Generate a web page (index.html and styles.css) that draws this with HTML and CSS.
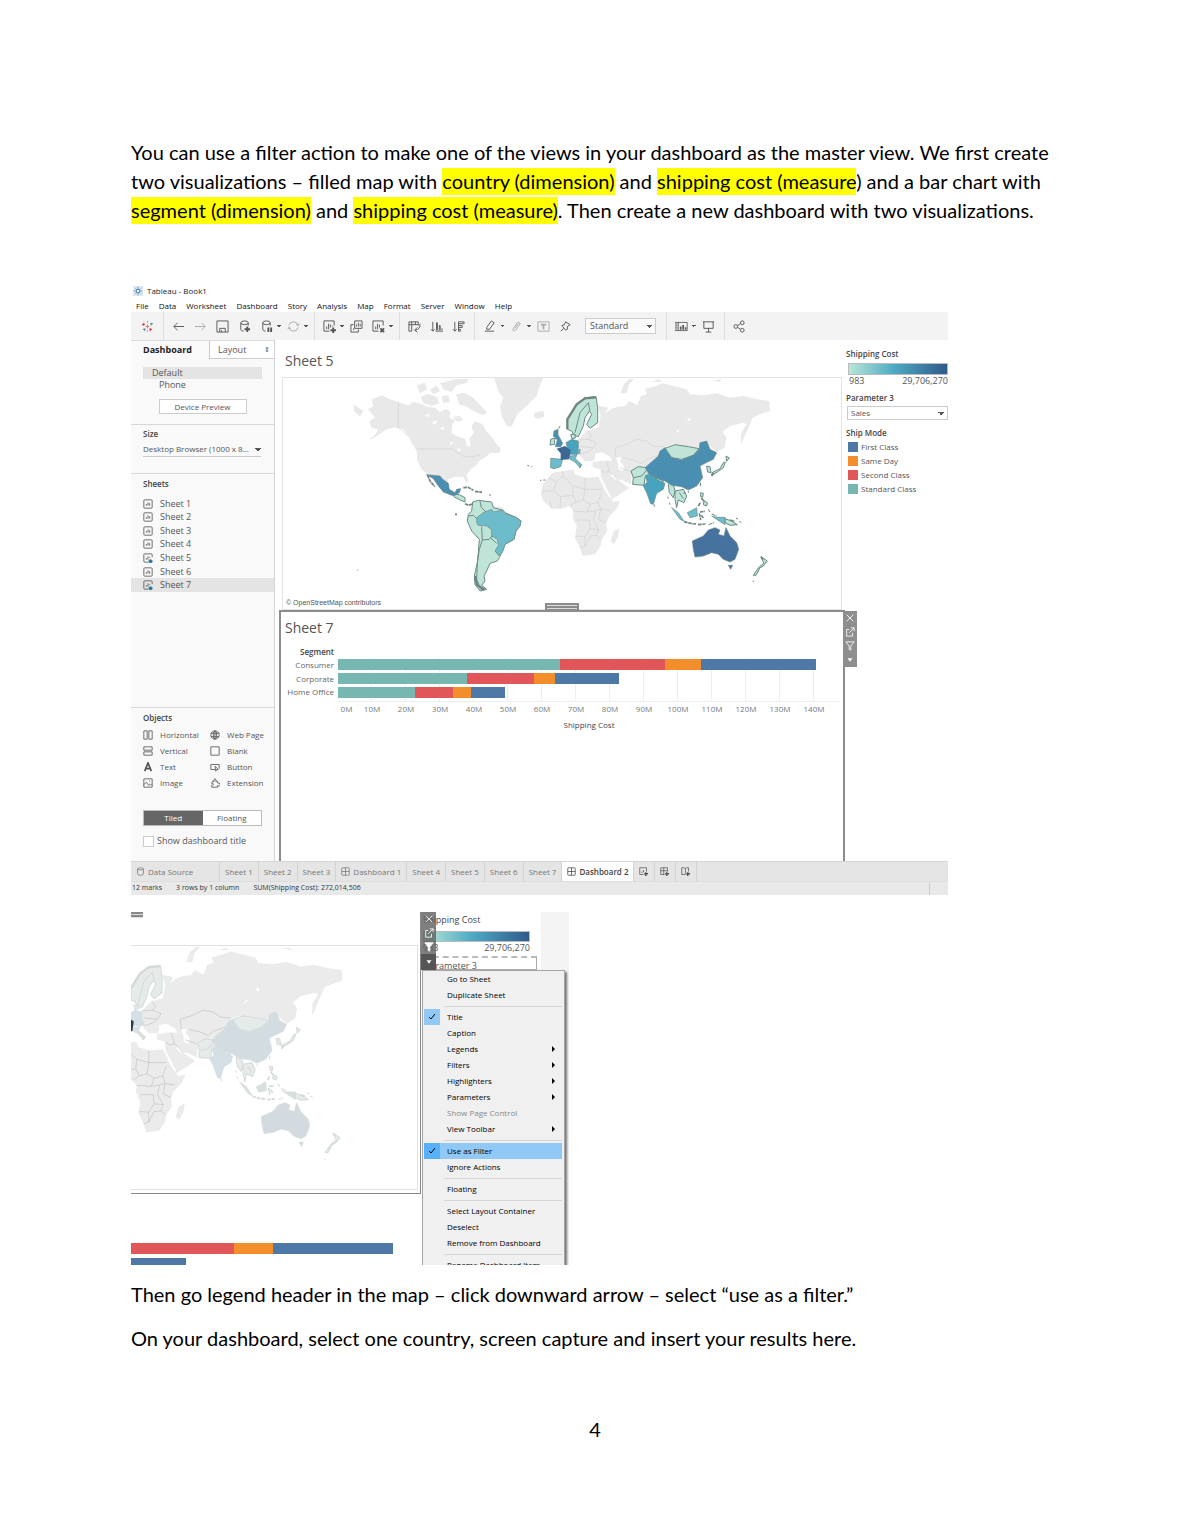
FILE: index.html
```html
<!DOCTYPE html>
<html lang="en">
<head>
<meta charset="utf-8">
<title>Dashboard filter actions</title>
<link rel="stylesheet" href="styles.css">
</head>
<body>
<svg class="defs" aria-hidden="true">
  <defs>
    <g id="world">
      <g class="land">
        <path d="M95 70L125 58L150 70L175 78L205 88L220 78L245 84L262 92L285 95L300 108L318 98L332 108L328 125L345 132L336 150L335 172L355 182L375 188L382 212L392 210L388 190L400 172L395 150L405 135L428 145L438 165L455 182L475 212L480 230L450 232L435 245L420 252L408 268L392 280L380 296L385 318L378 320L370 303L345 302L325 310L320 325L300 308L262 294L245 280L232 255L230 225L215 200L205 180L190 160L165 154L140 160L110 180L80 196L105 176L114 160L95 155L88 135L105 125L84 100L100 90Z"/>
        <path d="M230 28L255 20L262 40L240 52ZM270 42L290 28L300 45L280 55ZM300 22L345 10L385 8L382 20L350 28L335 48L312 42ZM348 55L372 50L400 65L415 82L440 108L432 118L405 108L380 92L358 86ZM242 62L265 54L290 62L298 82L275 90L250 80ZM305 60L325 58L330 78L310 82ZM340 122L360 120L370 132L352 138ZM465 205L482 215L480 228L462 222ZM40 85L70 105L60 122L42 104Z"/>
        <path d="M463 6L610 6L597 35L590 60L560 90L532 115L515 152L500 150L486 122L480 92L490 66L475 46ZM583 110L610 104L613 122L592 130L582 122Z"/>
        <path d="M460 388L490 395L492 404L460 402Z"/>
      </g>
      <path class="sea" d="M255 118L270 112L264 124ZM275 140L292 132L286 146ZM300 158L312 150L310 162ZM330 200L340 198L334 208ZM352 216L366 222L354 226Z"/>
      <path class="edge" d="M175 80V155M175 155L205 180M232 219H335L352 230L372 242L400 242L420 236"/>
      <g class="low">
        <path d="M398 378L415 373L455 378L460 395L490 403L495 410L530 425L543 435L540 450L528 465L522 490L495 505L485 530L478 545L472 555L450 562L440 585L432 600L435 615L425 628L440 640L420 645L405 625L403 600L412 560L415 530L418 490L395 465L382 435L385 415L395 405Z"/>
        <path d="M340 355L358 356L375 365L375 378L360 372L342 362Z"/>
        <path class="line" d="M425 452L427 492L418 520L412 560L410 610L422 640M427 492L448 490L456 480M470 502L452 486M385 420L400 418L412 430M420 376L424 394L438 408M465 525L478 540"/>
      </g>
      <path class="mid" d="M260 296L300 300L308 310L325 322L328 340L345 350L350 340L362 338L358 350L345 358L335 358L310 348L295 330L280 308Z"/>
      <path class="coast" d="M262 297L272 318L285 332M370 335L385 334L400 343M405 346L426 349M375 383L385 388L398 384M345 415H351M405 605L412 628L435 641"/>
      <path class="specks" d="M562 268L568 270M574 272H577M600 313H604M610 312H616M450 354V360M52 582H55"/>
      <path class="tip" d="M406 600L410 625L432 642"/>
      <path class="sky" d="M410 425L430 410L455 400L460 408L485 403L495 413L530 425L543 435L540 450L528 465L522 490L495 505L488 528L478 538L465 525L475 508L472 490L455 480L455 462L440 450L415 448L410 440Z"/>
      <g transform="translate(570 0)">
        <g class="land">
          <path d="M68 290L100 285L130 280L135 295L165 305L205 302L215 320L232 352L250 378L270 374L262 395L235 425L228 445L232 465L215 490L212 510L195 535L158 540L150 515L135 485L140 450L128 425L130 405L118 390L95 398L65 398L40 375L33 355L38 325L55 305ZM250 468L268 456L264 482L252 504L242 496Z"/>
          <path d="M203 88L235 95L226 112L242 100L262 92L285 90L298 75L322 88L332 60L350 55L345 38L370 32L400 22L440 32L470 40L480 55L520 58L560 52L600 65L640 60L680 70L718 75L720 105L690 115L668 125L655 155L640 190L632 205L634 170L650 145L640 140L600 150L578 168L590 185L584 215L560 228L520 195L500 218L430 205L400 215L385 240L350 270L330 275L305 290L303 325L275 312L262 310L298 336L270 355L245 370L232 345L212 300L212 280L188 274L188 258L215 255L200 240L190 255L165 256L150 240L143 215L145 192L170 165L205 155L212 120Z"/>
          <path d="M272 52L283 22L300 8L312 10L296 26L290 52ZM365 18L385 10L395 18ZM545 12L575 10L570 18ZM0 6L20 12L10 40L0 55Z"/>
        </g>
        <path class="sea" d="M258 245L274 242L270 256L282 270L278 286L266 280L264 262ZM194 234L215 228L240 242L246 254L215 254L196 250ZM212 306L226 330L244 364L238 364L222 338ZM244 292L262 308L258 312L244 300ZM435 172L445 160L448 164ZM470 130L480 126L480 136Z"/>
        <path class="edge" d="M55 305L80 318L100 300L98 285M80 318L70 345L38 345M100 300L130 330L165 340V305M165 340H215M130 330L128 358L92 362L70 345M128 358L138 378L118 390M92 362L90 396M60 375L65 398M165 340L160 372L138 378M160 372L180 385L205 378L215 350M180 385L172 408L130 405M205 378L212 400L240 404M172 408L196 404L212 400L206 430L228 440M196 404L190 432L206 460L180 458L178 432H140M138 480L165 482L180 458M165 482V510L150 515M206 460L200 478L180 480L165 510M200 478L212 490M145 192L175 190L200 200L190 215L150 212M150 235L180 225L190 215M175 165L185 180L175 190M258 215L290 205L320 190L350 195L370 210L400 212M258 245L255 215M280 245L310 252L335 262L350 250L385 238M230 255L238 285L262 310M212 282L225 290L240 285M270 275L300 285"/>
        <g class="low">
          <path d="M112 130L140 85L165 65L198 62L203 95L203 140L180 157L170 145L185 115L178 105L165 125L160 150L145 182L132 178L125 165L112 160Z"/>
          <path d="M62 190L75 186L73 205L60 207ZM402 218L435 206L475 212L507 218L490 238L455 250L425 245ZM303 285L325 272L352 275L358 290L345 305L342 328L308 325L310 305ZM415 325L428 318L435 345L430 365L418 350ZM435 345L460 340L470 360L462 380L445 372L440 395L435 370ZM530 270L540 272L543 290L533 288ZM375 304L400 314L398 320L378 312ZM585 428L605 435L622 446L600 448L585 440Z"/>
          <path class="line" d="M135 170L150 110L175 80L180 105M310 305L335 300L352 280M448 350L460 368"/>
          <path d="M588 240L598 246L590 256ZM586 258L580 275L562 288L545 298L546 290L570 278L580 260ZM693 542L712 555L700 570L690 575L678 598L670 598L688 572L702 562ZM512 350L520 352L518 364L512 362ZM522 374L532 380L530 390L520 386ZM122 176L135 174L136 186L126 188Z"/>
        </g>
        <path class="tip" d="M112 160V130L140 85L165 67L198 64"/>
        <path class="coast" d="M148 275L154 264M514 366L522 376M505 390L512 378M510 408L525 406M508 412L512 432M514 418L520 426M462 437L485 443L500 444M504 446L526 444M545 300L552 290M600 432L614 436M693 542L700 552"/>
        <path class="specks" d="M86 158L90 150M372 385L374 392M475 345V350M512 320L510 332M535 400L540 408M536 446L552 440M545 414L560 420M618 426L624 430M628 436L634 440M414 362V368M418 380L420 386M668 616H672M460 352L466 350"/>
        <path class="sky" d="M62 247L98 250L92 272L72 278L62 275ZM120 240L140 238L136 248L155 266L150 275L135 258L120 250ZM425 395L445 410L462 435L450 430ZM472 410L500 395L502 420L480 425ZM545 420L560 424L585 424L585 446L572 438L560 430ZM138 225L150 220L150 232L138 236Z"/>
        <path class="mid" d="M345 275L385 240L390 225L405 215L425 245L455 252L490 238L507 222L510 200L530 195L540 220L560 230L550 250L525 262L510 270L518 305L500 330L475 342L455 332L425 328L405 315L375 305L358 295ZM72 165L84 160L84 176L98 202L92 212L76 212L82 192L70 180Z"/>
        <path class="sea-blue" d="M345 300L360 295L375 308L405 322L400 340L380 352L370 385L362 383L350 350L340 330L352 318ZM108 200L125 190L145 195L145 215L140 235L115 235L112 215Z"/>
        <path class="high" d="M487 495L520 480L535 462L555 455L570 462L565 475L582 480L588 455L600 480L620 500L626 520L615 550L600 558L580 550L565 535L545 530L520 540L495 543L490 520ZM595 568L608 568L602 580Z"/>
        <path class="france" d="M80 218L105 210L122 222L118 250L92 252L92 232Z"/>
      </g>
    </g>
    <symbol id="i-sheet" viewBox="0 0 12 12"><rect x="1" y="1" width="10" height="10" rx="1"/><path d="M4 8V6M6 8V4M8 8V5"/></symbol>
    <symbol id="i-used" viewBox="0 0 12 12"><path d="M11 5V2Q11 1 10 1H2Q1 1 1 2V10Q1 11 2 11H6M4 8V6M6 8V4M8 6V5"/><circle cx="9" cy="10" r="2" fill="#2b7a9b" stroke="#2b7a9b"/></symbol>
    <symbol id="i-grid" viewBox="0 0 12 12"><rect x="1" y="1" width="10" height="10" rx="1"/><path d="M6 1V11M1 6H11"/></symbol>
    <symbol id="i-close" viewBox="0 0 12 12"><path d="M2 2L10 10M10 2L2 10"/></symbol>
    <symbol id="i-open" viewBox="0 0 12 12"><path d="M5 3H2V11H9V7M5 7L11 1M7 1H11V5"/></symbol>
    <symbol id="i-funnel" viewBox="0 0 12 12"><path d="M1 1H11L7 6V11L5 10V6Z"/></symbol>
    <symbol id="i-caret" viewBox="0 0 12 12"><path class="solid" d="M3 4H9L6 8Z"/></symbol>
    <symbol id="i-check" viewBox="0 0 12 12"><path d="M3 6L5 8L9 3"/></symbol>
  </defs>
</svg>

<main class="page">
  <p class="intro">You can use a filter action to make one of the views in your dashboard as the master view. We first create<br>two visualizations – filled map with <mark>country (dimension)</mark> and <mark>shipping cost (measure</mark>) and a bar chart with<br><mark>segment (dimension)</mark> and <mark>shipping cost (measure)</mark>. Then create a new dashboard with two visualizations.</p>

  <section class="app" aria-label="Tableau dashboard">
    <header class="titlebar">
      <svg class="logo" viewBox="0 0 12 12"><rect width="12" height="12" fill="#dbe8f3" stroke="none"/><path d="M6 1V11M1 6H11M3 3L9 9M9 3L3 9" stroke="#4a86b8"/><circle cx="6" cy="6" r="2" fill="#fff" stroke="#4a86b8"/></svg>
      <span>Tableau - Book1</span>
    </header>
    <nav class="menubar">
      <button>File</button><button>Data</button><button>Worksheet</button><button>Dashboard</button><button>Story</button><button>Analysis</button><button>Map</button><button>Format</button><button>Server</button><button>Window</button><button>Help</button>
    </nav>
    <div class="toolbar">
      <button class="tool" aria-label="Start page"><svg viewBox="0 0 14 14"><path stroke="#e8762c" d="M7 5V9M5 7H9"/><path stroke="#c72035" d="M3 3V6M1 5H4M10 9V12M9 10H12"/><path stroke="#59879b" d="M11 3V6M10 4H13M4 9V12M2 10H5"/><path stroke="#eb912c" d="M7 1V3M7 11V13"/></svg></button><i class="sep"></i>
      <button class="tool" aria-label="Undo"><svg viewBox="0 0 14 14"><path d="M13 7H2M6 3L2 7L6 11"/></svg></button>
      <button class="tool faint" aria-label="Redo"><svg viewBox="0 0 14 14"><path d="M1 7H12M8 3L12 7L8 11"/></svg></button>
      <button class="tool" aria-label="Save"><svg viewBox="0 0 14 14"><path d="M1 1H13V13H1ZM4 13V9H10V13M6 11V13"/></svg></button>
      <button class="tool" aria-label="New data source"><svg viewBox="0 0 14 14"><path d="M11 6V3Q11 1 7 1T3 3V10Q3 12 6 12M3 3Q3 5 7 5T11 3"/><path class="bold" d="M10 7V13M7 10H13"/></svg></button>
      <button class="tool" aria-label="Pause updates"><svg viewBox="0 0 14 14"><path d="M11 6V3Q11 1 7 1T3 3V10Q3 12 6 12M3 3Q3 5 7 5T11 3"/><path class="bold" d="M9 8V13M12 8V13"/></svg></button><i class="caret"></i>
      <button class="tool faint" aria-label="Refresh"><svg viewBox="0 0 14 14"><path d="M2 6Q3 2 7 2T12 6M12 8Q11 12 7 12T2 8M10 5L12 6L13 4M4 9L2 8L1 10"/></svg></button><i class="caret"></i><i class="sep"></i>
      <button class="tool" aria-label="New worksheet"><svg viewBox="0 0 14 14"><path d="M12 6V1H1V12H7M4 10V7M6 10V4M8 8V5M10 7V6"/><path class="bold" d="M11 8V14M8 11H14"/></svg></button><i class="caret"></i>
      <button class="tool" aria-label="Duplicate"><svg viewBox="0 0 14 14"><path d="M5 1H13V9H5ZM4 5H1V13H9V10M7 7V5M9 7V3M11 7V4M4 11V9"/></svg></button>
      <button class="tool" aria-label="Clear sheet"><svg viewBox="0 0 14 14"><path d="M12 6V1H1V12H7M4 10V7M6 10V4M8 8V5"/><path class="bold" d="M9 9L13 13M13 9L9 13"/></svg></button><i class="caret"></i><i class="sep"></i>
      <button class="tool" aria-label="Swap"><svg viewBox="0 0 14 14"><path d="M1 2H11V5H4V12H1ZM4 2V5M1 5H4M8 2V5M13 5Q13 10 8 11M10 8L7 11L10 13M11 6L13 4"/></svg></button>
      <button class="tool" aria-label="Sort ascending"><svg viewBox="0 0 14 14"><path d="M3 2V12M1 10L3 12L5 10M7 11V3H8V11M10 11V6H11V11M13 11V9M6 12H14"/></svg></button>
      <button class="tool" aria-label="Sort descending"><svg viewBox="0 0 14 14"><path d="M3 2V12M1 10L3 12L5 10M7 2H13V4H7M7 6H11V8H7M7 10H9V12H7V2"/></svg></button><i class="sep"></i>
      <button class="tool" aria-label="Highlight"><svg viewBox="0 0 14 14"><path d="M4 8L9 1L12 3L7 10H4ZM2 12H12"/></svg></button><i class="caret"></i>
      <button class="tool faint" aria-label="Group"><svg viewBox="0 0 14 14"><path d="M3 10L8 3Q10 1 11 4L6 11Q3 13 3 10M5 9L9 4"/></svg></button><i class="caret"></i>
      <button class="tool faint" aria-label="Labels"><svg viewBox="0 0 14 14"><path d="M1 2H13V12H1Z"/><path class="bold" d="M4 5H10M7 5V10"/></svg></button>
      <button class="tool" aria-label="Pin"><svg viewBox="0 0 14 14"><path d="M7 2L12 5L9 7V10L7 11L4 7L3 6L6 5ZM5 9L2 12"/></svg></button>
      <select class="fit" aria-label="Fit"><option>Standard</option></select><i class="sep"></i>
      <button class="tool" aria-label="Show cards"><svg viewBox="0 0 16 14"><path d="M0 2H15V12H0ZM4 2V12M1 4H3M1 6H3M1 8H3M1 10H3"/><path class="bold" d="M7 11V7M10 11V5M13 11V8"/></svg></button><i class="caret"></i>
      <button class="tool" aria-label="Presentation"><svg viewBox="0 0 14 14"><path d="M1 2H13M2 2V9H12V2M7 9V13M4 13H10"/></svg></button><i class="sep"></i>
      <button class="tool" aria-label="Share"><svg viewBox="0 0 14 14"><circle cx="3" cy="7" r="2"/><circle cx="10" cy="3" r="2"/><circle cx="10" cy="11" r="2"/><path d="M5 6L8 4M5 8L8 10"/></svg></button>
    </div>

    <div class="workspace">
      <aside class="sidebar">
        <div class="side-tabs"><button class="on">Dashboard</button><button>Layout <span>⇕</span></button></div>
        <section class="device">
          <ul><li class="picked">Default</li><li class="sub">Phone</li></ul>
          <button>Device Preview</button>
        </section>
        <section class="size">
          <h3><label for="size">Size</label></h3>
          <select id="size"><option>Desktop Browser (1000 x 8...</option></select>
        </section>
        <section class="sheets">
          <h3>Sheets</h3>
          <ul>
            <li><svg><use href="#i-sheet"/></svg>Sheet 1</li>
            <li><svg><use href="#i-sheet"/></svg>Sheet 2</li>
            <li><svg><use href="#i-sheet"/></svg>Sheet 3</li>
            <li><svg><use href="#i-sheet"/></svg>Sheet 4</li>
            <li><svg><use href="#i-used"/></svg>Sheet 5</li>
            <li><svg><use href="#i-sheet"/></svg>Sheet 6</li>
            <li class="picked"><svg><use href="#i-used"/></svg>Sheet 7</li>
          </ul>
        </section>
        <section class="objects">
          <h3>Objects</h3>
          <ul>
            <li><svg viewBox="0 0 12 12"><path d="M1 1H5V11H1ZM7 1H11V11H7Z"/></svg>Horizontal</li>
            <li><svg viewBox="0 0 12 12"><circle cx="6" cy="6" r="5"/><ellipse cx="6" cy="6" rx="2" ry="5"/><path d="M1 4H11M1 8H11M6 1V11"/></svg>Web Page</li>
            <li><svg viewBox="0 0 12 12"><path d="M1 1H11V5H1ZM1 7H11V11H1Z"/></svg>Vertical</li>
            <li><svg viewBox="0 0 12 12"><path d="M1 1H11V11H1Z"/></svg>Blank</li>
            <li><svg viewBox="0 0 12 12"><path class="bold" d="M2 11L6 1L10 11M4 8H8"/></svg>Text</li>
            <li><svg viewBox="0 0 12 12"><path d="M6 9H1V3H11V8M6 5L10 9H8L7 11Z"/></svg>Button</li>
            <li><svg viewBox="0 0 12 12"><path d="M1 1H11V11H1ZM1 8L4 5L7 9L9 7L11 9M8 3V4"/></svg>Image</li>
            <li><svg viewBox="0 0 12 12"><path d="M3 4H5Q4 1 6 1T7 4H9V6Q12 5 12 8T9 9V11H2V9Q5 8 4 7T2 7Z"/></svg>Extension</li>
          </ul>
          <div class="switch"><button class="on">Tiled</button><button>Floating</button></div>
          <label class="show"><input type="checkbox">Show dashboard title</label>
        </section>
      </aside>

      <div class="canvas">
        <section class="map-panel">
          <h2>Sheet 5</h2>
          <div class="map-box">
            <svg class="map" viewBox="-171 6 1674 690" preserveAspectRatio="xMinYMin meet"><use href="#world"/></svg>
            <small>© OpenStreetMap contributors</small>
          </div>
        </section>
        <section class="chart-panel">
          <i class="grip"></i>
          <div class="tools">
            <button aria-label="Remove"><svg><use href="#i-close"/></svg></button>
            <button aria-label="Go to sheet"><svg><use href="#i-open"/></svg></button>
            <button aria-label="Use as filter"><svg><use href="#i-funnel"/></svg></button>
            <button aria-label="More options"><svg><use href="#i-caret"/></svg></button>
          </div>
          <h2>Sheet 7</h2>
          <div class="chart">
            <div class="names"><b>Segment</b><span>Consumer</span><span>Corporate</span><span>Home Office</span></div>
            <div class="plot">
              <div class="bars">
                <div class="bar"><i class="teal" style="width:44.2%"></i><i class="red" style="width:21%"></i><i class="orange" style="width:7.2%"></i><i class="blue" style="width:22.8%"></i></div>
                <div class="bar"><i class="teal" style="width:25.6%"></i><i class="red" style="width:13.4%"></i><i class="orange" style="width:4.2%"></i><i class="blue" style="width:12.7%"></i></div>
                <div class="bar"><i class="teal" style="width:15.4%"></i><i class="red" style="width:7.5%"></i><i class="orange" style="width:3.5%"></i><i class="blue" style="width:6.8%"></i></div>
              </div>
              <div class="ticks"><span>0M</span><span>10M</span><span>20M</span><span>30M</span><span>40M</span><span>50M</span><span>60M</span><span>70M</span><span>80M</span><span>90M</span><span>100M</span><span>110M</span><span>120M</span><span>130M</span><span>140M</span></div>
              <div class="axis">Shipping Cost</div>
            </div>
          </div>
        </section>
      </div>

      <aside class="legend">
        <h3>Shipping Cost</h3>
        <div class="ramp"></div>
        <div class="range"><span>983</span><span>29,706,270</span></div>
        <h3><label for="param">Parameter 3</label></h3>
        <select id="param"><option>Sales</option></select>
        <h3>Ship Mode</h3>
        <ul>
          <li><i class="blue"></i>First Class</li>
          <li><i class="orange"></i>Same Day</li>
          <li><i class="red"></i>Second Class</li>
          <li><i class="teal"></i>Standard Class</li>
        </ul>
      </aside>
    </div>

    <nav class="tabs">
      <button class="source"><svg viewBox="0 0 12 12"><path d="M2 3Q2 1 6 1T10 3V9Q10 11 6 11T2 9ZM2 3Q6 5 10 3"/></svg>Data Source</button><button>Sheet 1</button><button>Sheet 2</button><button>Sheet 3</button><button><svg><use href="#i-grid"/></svg>Dashboard 1</button><button>Sheet 4</button><button>Sheet 5</button><button>Sheet 6</button><button>Sheet 7</button><button class="on"><svg><use href="#i-grid"/></svg>Dashboard 2</button>
      <button class="add" aria-label="New worksheet"><svg viewBox="0 0 12 12"><path d="M10 6V1H1V10H6M4 8V6M6 7V4"/><path class="bold" d="M9 7V12M7 9H12"/></svg></button><button class="add" aria-label="New dashboard"><svg viewBox="0 0 12 12"><path d="M10 6V1H1V10H6M5 1V10M1 5H10"/><path class="bold" d="M9 7V12M7 9H12"/></svg></button><button class="add" aria-label="New story"><svg viewBox="0 0 12 12"><path d="M10 6V1H7L6 2L4 1H1V10H6M6 2V9"/><path class="bold" d="M9 7V12M7 9H12"/></svg></button>
    </nav>
    <footer class="status"><span>12 marks</span><span>3 rows by 1 column</span><span>SUM(Shipping Cost): 272,014,506</span><i></i></footer>
  </section>

  <section class="closeup" aria-label="Map menu">
    <div class="left">
      <div class="frame">
        <i class="stub"></i>
        <svg class="map muted" viewBox="684 6 818 696" preserveAspectRatio="xMinYMin meet"><use href="#world"/></svg>
      </div>
      <div class="bars">
        <div class="bar"><i class="red" style="width:35.5%"></i><i class="orange" style="width:13.3%"></i><i class="blue" style="width:41.5%"></i></div>
        <div class="bar"><i class="blue" style="width:19%"></i></div>
      </div>
    </div>
    <div class="right">
      <div class="key">
        <h3>Shipping Cost</h3>
        <div class="ramp"></div>
        <div class="range"><span>983</span><span>29,706,270</span></div>
        <div class="param">Parameter 3</div>
      </div>
      <div class="tools">
        <button aria-label="Remove"><svg><use href="#i-close"/></svg></button>
        <button aria-label="Go to sheet"><svg><use href="#i-open"/></svg></button>
        <button class="filled" aria-label="Use as filter"><svg><use href="#i-funnel"/></svg></button>
        <button class="active" aria-label="More options"><svg><use href="#i-caret"/></svg></button>
      </div>
      <div class="menu">
        <button>Go to Sheet</button><button>Duplicate Sheet</button><hr>
        <button class="ticked"><svg><use href="#i-check"/></svg>Title</button><button>Caption</button><button class="more">Legends</button><button class="more">Filters</button><button class="more">Highlighters</button><button class="more">Parameters</button><button disabled>Show Page Control</button><button class="more">View Toolbar</button><hr>
        <button class="ticked lit"><svg><use href="#i-check"/></svg>Use as Filter</button><button>Ignore Actions</button><hr>
        <button>Floating</button><hr>
        <button>Select Layout Container</button><button>Deselect</button><button>Remove from Dashboard</button><hr>
        <button>Rename Dashboard Item...</button>
      </div>
    </div>
  </section>

  <p class="step">Then go legend header in the map – click downward arrow – select “use as a filter.”</p>
  <p class="step">On your dashboard, select one country, screen capture and insert your results here.</p>
  <footer class="folio">4</footer>
</main>
</body>
</html>
```
FILE: styles.css
```css
* { box-sizing: border-box; }
body { margin: 0; background: #fff; color: #000; }
ul { list-style: none; margin: 0; padding: 0; }
h2, h3, p { margin: 0; }
button, select { font: inherit; color: inherit; border: 0; background: none; padding: 0; margin: 0; border-radius: 0; }
select { appearance: none; }
svg { fill: none; stroke: currentColor; stroke-width: 1; flex: none; }
.bold { stroke-width: 2; }
.solid { fill: currentColor; stroke: none; }
.defs { position: absolute; width: 0; height: 0; }
:root { --arrow: conic-gradient(from -45deg at 50% 100%, #555 90deg, transparent 0); }

.page { padding: 138px 131px 94px; font: 20px/29px Lato, Carlito, sans-serif; }
.intro { white-space: nowrap; margin-bottom: 59px; }
mark { background: #ff0; padding: 1px 0 2px; }
.step { margin-top: 15px; }
.folio { margin-top: 62px; text-align: center; }

.teal { background: #76b7b2; }
.red { background: #e15759; }
.orange { background: #f28e2b; }
.blue { background: #4e79a7; }

/* Tableau window */
.app, .closeup { font: 8px/12px "Open Sans", "Noto Sans", sans-serif; color: #555; }
.app { max-width: 817px; }
.app h3, .closeup h3 { font-size: 8px; line-height: 12px; font-weight: 600; color: #444; }
.titlebar { display: flex; align-items: center; gap: 4px; height: 14px; padding-left: 2px; color: #222; }
.logo { width: 10px; height: 10px; }
.menubar { display: flex; gap: 10px; height: 14px; padding: 1px 5px; font-size: 8px; line-height: 14px; color: #111; }
.toolbar { display: flex; align-items: center; height: 28px; padding-left: 5px; background: #f3f3f3; }
.tool { width: 22px; height: 22px; display: grid; place-items: center; color: #555; }
.tool svg { width: 13px; height: 13px; }
.faint { color: #aaa; }
.sep { width: 1px; height: 28px; margin: 0 3px 0 5px; background: #ddd; }
.caret { width: 5px; height: 5px; background: var(--arrow) 0 1px / 4px 2px no-repeat; }
.fit { width: 71px; height: 16px; margin: 0 5px 0 9px; padding: 0 4px; border: 1px solid #ccc; background: var(--arrow) 60px 6px / 6px 3px no-repeat #fafafa; font-size: 9px; }

.workspace { display: grid; grid-template-columns: 144px minmax(0, 1fr) 103px; }
.sidebar { display: flex; flex-direction: column; background: #f9f9f9; border-right: 1px solid #d4d4d4; border-top: 1px solid #ddd; }
.sidebar section { border-bottom: 1px solid #d8d8d8; padding: 0 12px; }
.side-tabs { display: grid; grid-template-columns: 78px 1fr; height: 18px; font-size: 9px; }
.side-tabs button { border-left: 1px solid #ccc; border-bottom: 1px solid #ccc; background: #fff; text-align: left; padding: 0 4px 0 8px; display: flex; justify-content: space-between; align-items: center; }
.side-tabs span { font-size: 7px; }
.side-tabs .on { border: 0; background: none; font-weight: 700; color: #222; padding-left: 12px; }
.picked { background: #e4e4e4; }
.device { height: 66px; display: flex; flex-direction: column; align-items: center; padding-top: 8px !important; font-size: 9px; }
.device ul { width: 100%; }
.device li { padding-left: 9px; line-height: 12px; }
.device .sub { padding-left: 16px; }
.device button { width: 88px; height: 15px; margin-top: 8px; border: 1px solid #ccc; background: #fff; font-size: 8px; }
.size { height: 49px; padding-top: 3px !important; }
.size select { width: 118px; height: 15px; margin-top: 2px; border-bottom: 1px solid #ccc; background: var(--arrow) 112px 6px / 6px 3px no-repeat; }
.sheets { flex: 1; padding-top: 4px !important; }
.sheets ul { display: grid; grid-template-rows: repeat(7, 1fr); height: 95px; margin: 7px -12px 0; font-size: 9px; }
.sheets li { display: flex; align-items: center; gap: 7px; padding-left: 12px; }
.sheets svg, .objects svg { width: 10px; height: 10px; }
.objects { height: 153px; border: 0 !important; padding-top: 4px !important; }
.objects ul { display: grid; grid-template-columns: 67px 1fr; grid-auto-rows: 16px; margin-top: 3px; }
.objects li { display: flex; align-items: center; gap: 7px; white-space: nowrap; }
.switch { display: grid; grid-template-columns: 1fr 1fr; height: 16px; margin-top: 19px; border: 1px solid #bbb; background: #fff; }
.switch .on { background: #666; color: #fff; }
.show { display: flex; align-items: center; gap: 3px; margin-top: 9px; font-size: 9px; white-space: nowrap; }
.show input { appearance: none; width: 11px; height: 11px; margin: 0; border: 1px solid #ccc; background: #fff; }

.app h2 { font-size: 14px; line-height: 18px; font-weight: 400; color: #555; }
.canvas { padding: 0 0 0 4px; }
.map-panel { height: 270px; padding: 12px 3px 0 3px; }
.map-box { display: flex; flex-direction: column; height: 233px; margin-top: 7px; border: 1px solid #e4e4e4; }
.map-box small { padding-left: 3px; margin-top: -9px; font: 7px/8px "Liberation Sans", Arial, sans-serif; }
.map-panel h2 { padding-left: 3px; }
.map { display: block; width: 100%; stroke: none;
  --land: #e9e9e9; --edge: #d2d2d2; --low: #bfe5d9; --line: #6b8a86; --coast: #6f8582; --sky: #6dbccb; --mid: #4a8fb2; --india: #48a3bf; --high: #45729f; --france: #3d6795; }
.land { fill: var(--land); }
.sea { fill: #fff; }
.edge { fill: none; stroke: var(--edge); stroke-width: 2; }
.low { fill: var(--low); stroke: var(--line); stroke-width: 3; stroke-linejoin: round; }
.line { fill: none; }
.coast, .specks, .tip { fill: none; stroke: var(--coast); stroke-width: 5; stroke-dasharray: 11 2; }
.specks { stroke-width: 3; }
.tip { stroke-width: 7; stroke-dasharray: none; }
.sky, .mid, .sea-blue, .high { stroke: var(--line); stroke-width: 2; }
.sky { fill: var(--sky); }
.mid { fill: var(--mid); }
.sea-blue { fill: var(--india); }
.high { fill: var(--high); }
.france { fill: var(--france); }
.muted { --land: #ebebeb; --edge: #c4c4c4; --low: #e4ebe8; --line: #d6dcdc; --coast: #d5d9d9; --sky: #d7dfe0; --mid: #d3dde1; --india: #d3e0e6; --high: #d3dae0; --france: #2c3c4c; }

.chart-panel { position: relative; height: 251px; padding: 7px 0 0 4px; border: 2px solid #8c8c8c; border-bottom: 0; }
.grip { position: absolute; left: 264px; top: -9px; width: 34px; height: 8px; border: 2px solid #8c8c8c; background: linear-gradient(#ddd 1px, #8c8c8c 1px 3px, #ddd 3px); }
.tools { position: absolute; display: grid; grid-auto-rows: 14px; width: 14px; background: #8e8e8e; color: #fff; }
.tools button { display: grid; place-items: center; }
.tools svg { width: 10px; height: 10px; }
.chart-panel .tools { right: -14px; top: -1px; }
.chart { display: grid; grid-template-columns: 53px 1fr; margin-top: 8px; }
.names { display: grid; grid-template-rows: 13px 14px 13px 14px; text-align: right; padding-right: 4px; white-space: nowrap; line-height: 13px; color: #666; }
.names b { font-weight: 600; color: #444; }
.names, .ticks { align-content: start; }
.plot { padding-top: 13px; margin-right: 3px; }
.plot .bars { display: grid; gap: 3px; padding: 1px 0 3px; background: repeating-linear-gradient(90deg, transparent 0 33px, #eee 33px 34px); border-bottom: 1px solid #eee; }
.bar { display: flex; height: 11px; }
.ticks { display: grid; grid-template-columns: 17px repeat(14, 34px); margin-top: 1px; text-align: center; color: #777; }
.axis { text-align: center; margin-top: 4px; color: #444; }

.legend { padding: 8px 0 0 1px; }
.legend .ramp { height: 12px; margin: 3px 0 0 2px; }
.ramp { background: linear-gradient(90deg, #b7e6d8, #4fabc4 45%, #2e5a8b); border: 1px solid #bbb; }
.range { display: flex; justify-content: space-between; padding-left: 3px; font-size: 9px; }
.legend select { display: block; width: 101px; height: 14px; margin: 2px 0 0 1px; padding: 0 3px; border: 1px solid #ccc; background: var(--arrow) 90px 5px / 6px 3px no-repeat #fff; }
.legend .range + h3 { margin: 5px 0 2px; }
.legend select + h3 { margin: 7px 0 1px; }
.legend li { display: flex; align-items: center; gap: 3px; height: 14px; padding-left: 2px; white-space: nowrap; }
.legend li i { width: 10px; height: 10px; }

.tabs { display: flex; height: 20px; background: #e5e5e5; border-top: 1px solid #d5d5d5; color: #777; line-height: 10px; }
.tabs button { display: flex; align-items: center; gap: 3px; padding: 0 5px; border-right: 1px solid #d2d2d2; white-space: nowrap; }
.tabs svg { width: 9px; height: 9px; }
.tabs .source { width: 89px; }
.tabs .on { background: #fff; color: #444; font-weight: 600; }
.tabs .add { width: 21px; color: #555; }
.status { display: flex; gap: 14px; height: 14px; background: #e9e9e9; border-top: 1px solid #ddd; padding: 0 1px; font-size: 7px; color: #333; }
.status i { width: 18px; margin-left: auto; border-left: 1px solid #ccc; }

/* Close-up of the map menu */
.closeup { display: grid; grid-template-columns: minmax(0, 290px) 148px; height: 353px; max-width: 438px; margin-top: 17px; overflow: hidden; }
.frame { height: 282px; padding: 33px 2px 0 0; border-right: 1px solid #888; border-bottom: 1px solid #888; position: relative; }
.frame .map { border: 1px solid #e0e0e0; border-left: 0; height: 245px; }
.stub { position: absolute; left: 0; top: 0; width: 12px; height: 6px; background: linear-gradient(#888 2px, #ddd 2px 3px, #888 3px 5px, #ddd 5px); }
.left .bars { display: grid; gap: 4px; margin-top: 49px; }
.right { position: relative; background: linear-gradient(90deg, #fff 120px, #f4f4f4 120px); }
.key { width: 116px; padding: 2px 0 0 2px; }
.closeup .key h3 { font-size: 9px; font-weight: 400; }
.key .ramp { width: 107px; height: 11px; margin: 5px 0 0; }
.key .range { width: 107px; padding-left: 0; }
.key .param { height: 14px; margin-top: 2px; padding: 2px 0 0 1px; border: 1px solid #aaa; border-top: 2px dashed #bbb; font-size: 9px; }
.right .tools { left: 0; top: 0; width: 15px; background: rgba(95, 95, 95, .8); }
.filled svg { fill: currentColor; }
.tools .active { height: 16px; background: #555; }
.menu { position: absolute; left: 1px; top: 58px; width: 143px; padding: 0 1px 2px; background: #f0f0f0; border: 1px solid #a5a5a5; box-shadow: 2px 2px 2px #777; color: #000; }
.menu button { display: block; position: relative; width: 138px; height: 16px; padding-left: 23px; text-align: left; white-space: nowrap; line-height: 16px; }
.menu hr { height: 1px; margin: 3px 1px 2px 20px; border: 0; background: #d5d5d5; }
.menu button:disabled { color: #888; }
.menu svg { position: absolute; left: 0; top: 0; width: 16px; height: 16px; padding: 2px; background: #90c8f6; }
.menu .lit { background: #90c8f6; }
.menu .lit svg { background: #56b0fa; }
.more::after { content: ""; position: absolute; right: 7px; top: 5px; border: 3px solid transparent; border-left-color: #000; border-right: 0; }
```
